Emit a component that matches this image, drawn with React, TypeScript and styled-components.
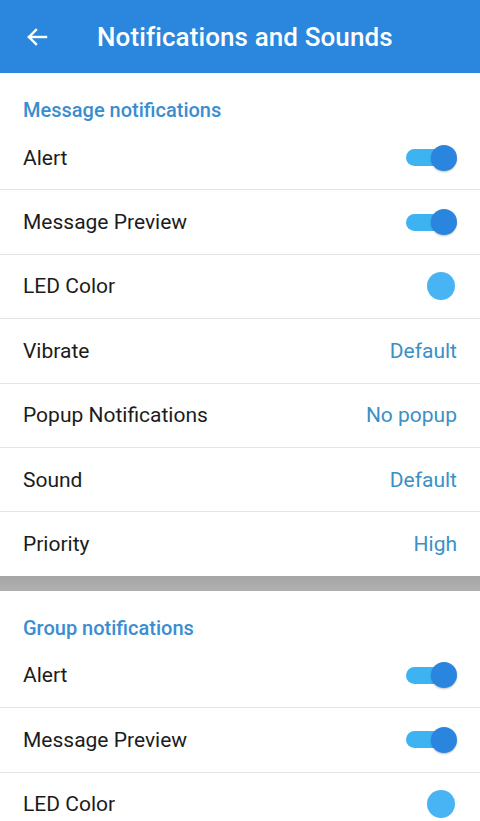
import styled, { createGlobalStyle } from 'styled-components'

const GlobalStyle = createGlobalStyle`
  html, body {
    margin: 0;
    padding: 0;
    background: #ffffff;
  }
  body {
    font-family: Roboto, "Noto Sans", sans-serif;
    overflow: hidden;
  }
`

const Page = styled.div`
  width: 480px;
  min-height: 821px;
  background: #ffffff;
`

const TopBar = styled.header`
  height: 73px;
  background: #2b87dd;
  display: flex;
  align-items: center;
  padding-left: 24px;
  gap: 47px;
  box-sizing: border-box;
`

const BackButton = styled.button`
  width: 26px;
  height: 26px;
  padding: 0;
  border: none;
  background: none;
  display: flex;
  align-items: center;
  justify-content: center;
  color: #ffffff;
`

const Title = styled.h1`
  margin: 0;
  color: #ffffff;
  font-size: 26px;
  font-weight: 500;
  letter-spacing: 0.1px;
`

const SectionTitle = styled.div`
  padding: 27px 23px 0;
  height: 53px;
  box-sizing: border-box;
  font-size: 20px;
  line-height: 20px;
  font-weight: 500;
  color: #3a8dd0;
`

const Row = styled.div<{ $last?: boolean }>`
  height: 63.4px;
  display: flex;
  align-items: center;
  justify-content: space-between;
  padding: 0 23px;
  border-bottom: ${(p) => (p.$last ? 'none' : '1px solid #e4e4e4')};
`

const Label = styled.span`
  font-size: 21px;
  color: #1c1c1c;
`

const Value = styled.span`
  font-size: 21px;
  color: #3b90c6;
`

const Track = styled.div`
  position: relative;
  width: 46px;
  height: 17px;
  border-radius: 9px;
  background: #3db3f1;
  margin-right: 5px;
`

const Thumb = styled.div`
  position: absolute;
  right: -5px;
  top: -4.5px;
  width: 26px;
  height: 26px;
  border-radius: 50%;
  background: #2a85df;
  box-shadow: 0 1px 2px rgba(0, 0, 0, 0.25);
`

const LedDot = styled.div`
  width: 28px;
  height: 28px;
  border-radius: 50%;
  background: #48b4f4;
  margin-right: 2px;
`

const Divider = styled.div`
  height: 15px;
  background: linear-gradient(#a5a5a5, #b0b0b0);
`

type Item = { label: string; kind: 'toggle' | 'led' | 'text'; value?: string }

const messageItems: Item[] = [
  { label: 'Alert', kind: 'toggle' },
  { label: 'Message Preview', kind: 'toggle' },
  { label: 'LED Color', kind: 'led' },
  { label: 'Vibrate', kind: 'text', value: 'Default' },
  { label: 'Popup Notifications', kind: 'text', value: 'No popup' },
  { label: 'Sound', kind: 'text', value: 'Default' },
  { label: 'Priority', kind: 'text', value: 'High' },
]

const groupItems: Item[] = [
  { label: 'Alert', kind: 'toggle' },
  { label: 'Message Preview', kind: 'toggle' },
  { label: 'LED Color', kind: 'led' },
]

const Toggle = () => (
  <Track>
    <Thumb />
  </Track>
)

const Section = ({ title, items }: { title: string; items: Item[] }) => (
  <section>
    <SectionTitle>{title}</SectionTitle>
    {items.map((item, i) => (
      <Row key={item.label} $last={i === items.length - 1}>
        <Label>{item.label}</Label>
        {item.kind === 'toggle' && <Toggle />}
        {item.kind === 'led' && <LedDot />}
        {item.kind === 'text' && <Value>{item.value}</Value>}
      </Row>
    ))}
  </section>
)

const App = () => (
  <Page>
    <GlobalStyle />
    <TopBar>
      <BackButton aria-label="Back">
        <svg width="24" height="24" viewBox="0 0 24 24" fill="none" stroke="currentColor" strokeWidth="2.4" strokeLinecap="square">
          <path d="M21 12H4" />
          <path d="M11 5l-7 7 7 7" />
        </svg>
      </BackButton>
      <Title>Notifications and Sounds</Title>
    </TopBar>
    <Section title="Message notifications" items={messageItems} />
    <Divider />
    <Section title="Group notifications" items={groupItems} />
  </Page>
)

export default App
